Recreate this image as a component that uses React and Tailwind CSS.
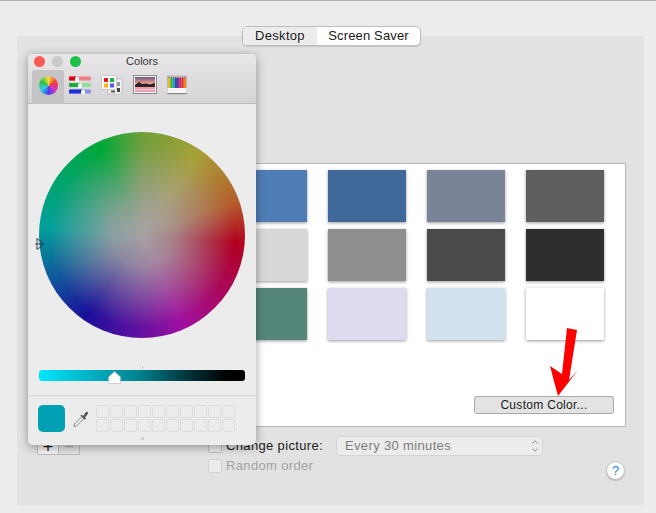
import { ChevronUp, ChevronDown } from 'lucide-react';

const swatches = [
  '#4f7db5', '#40699a', '#798597', '#5f5f5f',
  '#d8d8d8', '#8f8f8f', '#4a4a4a', '#2e2e2e',
  '#54877a', '#dfdaf0', '#d2e1ee', '#ffffff',
];

function SliderIcon() {
  return (
    <svg width="23" height="18" viewBox="0 0 23 18">
      <rect x="0" y="0.5" width="22" height="4" rx="1" fill="#f08088" />
      <rect x="0" y="0.5" width="8" height="4" rx="1" fill="#e00010" />
      <rect x="0" y="7" width="22" height="4" rx="1" fill="#90e09c" />
      <rect x="0" y="7" width="11" height="4" rx="1" fill="#18b038" />
      <rect x="0" y="13.5" width="22" height="4" rx="1" fill="#8490ec" />
      <rect x="0" y="13.5" width="14" height="4" rx="1" fill="#2030d8" />
      <path d="M6 5.5 V2 L8 0 L10 2 V5.5 Z" fill="#f8f8f8" />
      <path d="M9 12 V8.5 L11 6.5 L13 8.5 V12 Z" fill="#f8f8f8" />
      <path d="M12 18 V15 L14 13 L16 15 V18 Z" fill="#f8f8f8" />
    </svg>
  );
}

function PaletteIcon() {
  return (
    <svg width="22" height="20" viewBox="0 0 22 20">
      <rect x="7" y="4" width="14" height="15" fill="#f2f2f2" stroke="#aaa" strokeWidth="0.6" />
      <rect x="16" y="7" width="3" height="4" fill="#9a9a9a" />
      <rect x="16" y="13" width="3" height="4" fill="#444" />
      <rect x="10" y="15.5" width="4" height="2" fill="#555" />
      <rect x="0.5" y="0.5" width="15" height="14" fill="#fafafa" stroke="#b5b5b5" strokeWidth="0.6" />
      <rect x="3" y="3" width="4" height="4" fill="#f01020" />
      <rect x="9" y="3" width="4" height="4" fill="#18b848" />
      <rect x="3" y="8.5" width="4" height="4" fill="#f8b818" />
      <rect x="9" y="8.5" width="4" height="4" fill="#5858f0" />
    </svg>
  );
}

function ImageIcon() {
  return (
    <svg width="24" height="19" viewBox="0 0 24 19">
      <defs>
        <linearGradient id="sky" x1="0" y1="0" x2="0" y2="1">
          <stop offset="0" stopColor="#6a5a88" />
          <stop offset="0.45" stopColor="#f8a088" />
          <stop offset="1" stopColor="#e0a0c0" />
        </linearGradient>
      </defs>
      <rect x="0.5" y="0.5" width="23" height="18" fill="#f6f6f6" stroke="#8a8a8a" />
      <rect x="2" y="2" width="20" height="15" fill="url(#sky)" />
      <path d="M2 10 L6 7 L9 9 L13 8.5 L17 9.5 L22 8 L22 12 L2 12 Z" fill="#2c2228" />
      <rect x="2" y="14" width="20" height="1" fill="#f4ccd4" />
    </svg>
  );
}

function PencilsIcon() {
  const colors = ['#e8c020', '#40b040', '#20a0a0', '#2050c0', '#8030a0', '#d02060', '#e03020', '#f08020'];
  return (
    <svg width="20" height="20" viewBox="0 0 20 20">
      <rect x="0.5" y="1" width="19" height="18" fill="#eee" stroke="#999" strokeWidth="0.6" />
      {colors.map((c, i) => (
        <g key={c}>
          <path d={`M${1 + i * 2.25} 3 L${2 + i * 2.25} 1 L${3.2 + i * 2.25} 3 Z`} fill="#7a6a60" />
          <rect x={1 + i * 2.25} y="3" width="2.25" height="10" fill={c} />
        </g>
      ))}
      <rect x="0.5" y="13" width="19" height="5" fill="#f4f4f4" />
      <rect x="0.5" y="18" width="19" height="1" fill="#888" />
    </svg>
  );
}

function Eyedropper() {
  return (
    <svg width="18" height="18" viewBox="0 0 18 18">
      <path d="M2.5 14 L10 6.5 L12 8.5 L4.5 16 L2 16.5 Z" fill="#ededed" stroke="#8a8a8a" strokeWidth="1" />
      <path d="M9.5 4.5 L11 6 L14 2 C15 1 16.8 2.4 16 3.7 L13 7.5 L14 8.8 L12.6 9.8 L8.5 5.6 Z" fill="#555" />
    </svg>
  );
}

function ColorsWindow() {
  return (
    <div className="absolute left-[28px] top-[53px] w-[228px] h-[391px] flex flex-col rounded-[5px] bg-[#ececec] shadow-[0_2px_10px_rgba(0,0,0,0.38)] overflow-hidden">
      <div className="h-[50px] shrink-0 relative bg-gradient-to-b from-[#e9e7e9] to-[#d5d3d5] border-b border-[#b9b9b9]">
        <div className="flex gap-[7px] pl-[6px] pt-[2px]">
          <div className="w-[11px] h-[11px] rounded-full bg-[#fb5a55]" />
          <div className="w-[11px] h-[11px] rounded-full bg-[#c9c9c9]" />
          <div className="w-[11px] h-[11px] rounded-full bg-[#1fc04a]" />
        </div>
        <div className="absolute -top-px inset-x-0 text-center text-[11px] leading-[17px] text-[#333]">Colors</div>
        <div className="flex items-end h-[35px] pl-[4px] mt-[2px]">
          <div className="w-[32px] h-[34px] bg-[#c5c3c5] rounded-t-[3px] flex items-center justify-center pb-[4px]">
            <div className="w-[19px] h-[19px] rounded-full bg-[conic-gradient(#f0e040,#f04030,#e030c0,#4040f0,#30d0e0,#30c040,#f0e040)]" />
          </div>
          <div className="flex items-center h-[34px] ml-[5px] pb-[4px]"><SliderIcon /></div>
          <div className="flex items-center h-[34px] ml-[9px] pb-[5px]"><PaletteIcon /></div>
          <div className="flex items-center h-[34px] ml-[10px] pb-[5px]"><ImageIcon /></div>
          <div className="flex items-center h-[34px] ml-[10px] pb-[4px]"><PencilsIcon /></div>
        </div>
      </div>

      <div className="pt-[28px] pl-[11px]">
        <div className="relative w-[206px] h-[206px] rounded-full bg-[conic-gradient(from_0deg,#6f9e3a_0deg,#a8a038_35deg,#b4602c_70deg,#b00020_95deg,#a80c70_135deg,#a010a0_155deg,#5a10a0_185deg,#1a109a_215deg,#105a9c_245deg,#00a09a_275deg,#00a46a_305deg,#00a838_335deg,#6f9e3a_360deg)]">
          <div className="absolute inset-0 rounded-full bg-[radial-gradient(circle_closest-side,rgba(166,162,162,1)_0%,rgba(166,162,162,0.8)_30%,rgba(166,162,162,0.38)_62%,rgba(166,162,162,0)_90%)]" />
          <svg className="absolute left-[-4px] top-[105px]" width="11" height="14" viewBox="0 0 11 14">
            <path d="M2 1 V13 M0 7 H9" stroke="#223" strokeWidth="0.8" fill="none" />
            <path d="M2 2.5 A5 4.5 0 0 1 2 11.5" stroke="#223" strokeWidth="0.8" fill="none" />
          </svg>
        </div>
      </div>

      <div className="ml-[114px] mt-[28px] w-px h-[3px] bg-[#bbb]" />
      <div className="relative mx-[11px] mt-px h-[11px] rounded-[3px] bg-gradient-to-r from-[#00e8ff] via-[#007f8c] to-[#000000]">
        <svg className="absolute left-[69px] top-[1px]" width="13" height="13" viewBox="0 0 13 13">
          <path d="M6.5 0.5 L12.5 6 V12.5 H0.5 V6 Z" fill="#fff" stroke="#b5b5b5" strokeWidth="0.6" />
        </svg>
      </div>

      <div className="mt-[14px] border-t border-[#d6d6d6] flex items-center pl-[10px] pt-[9px]">
        <div className="w-[27px] h-[27px] rounded-[5px] bg-[#00a1b4]" />
        <div className="ml-[7px] w-[18px]"><Eyedropper /></div>
        <div className="ml-[6px] grid grid-cols-[repeat(10,13px)] gap-px">
          {Array.from({ length: 20 }).map((_, i) => (
            <div key={i} className="h-[13px] rounded-[2px] border border-[#dcdcdc]" />
          ))}
        </div>
      </div>
      <div className="mt-[5px] mx-auto w-[3px] h-[3px] rounded-full bg-[#c9c9c9]" />
    </div>
  );
}

export default function App() {
  return (
    <div className="relative w-[656px] h-[513px] overflow-hidden bg-[#ececec] border-t border-[#b0b0b0] font-['Liberation_Sans',sans-serif] text-[13px] text-[#1a1a1a]">
      <div className="relative ml-[17px] mt-[35px] w-[627px] h-[469px] bg-[#e2e2e2] rounded-[2px] pt-[127px] pl-[20px]">
        <div className="absolute left-[225px] top-[-10px] w-[179px] h-[20px] flex rounded-[5px] border border-[#bdbdbd] bg-white overflow-hidden shadow-[0_1px_1px_rgba(0,0,0,0.12)]">
          <div className="w-[74px] bg-[#ececec] text-center leading-[18px] tracking-[0.3px]">Desktop</div>
          <div className="flex-1 text-center leading-[18px] tracking-[0.15px]">Screen Saver</div>
        </div>

        <div className="w-[589px] h-[264px] bg-white border border-[#b8b8b8] pl-[191px] pt-[6px] relative">
          <div className="grid grid-cols-[repeat(4,78px)] grid-rows-[repeat(3,52px)] gap-x-[21px] gap-y-[7px]">
            {swatches.map((c, i) => (
              <div key={i} className="shadow-[0_1px_3px_rgba(0,0,0,0.4)]" style={{ backgroundColor: c }} />
            ))}
          </div>
          <div className="absolute left-[436px] top-[232px] w-[140px] h-[18px] rounded-[3px] border border-[#a8a8a8] bg-[#e3e3e3] text-center text-[12px] leading-[16px] tracking-[0.3px]">Custom Color...</div>
        </div>

        <div className="flex">
          <div className="flex h-[22px] mt-[6px] w-[43px] border border-[#bcbcbc] rounded-[2px]">
            <div className="w-[21px] bg-[#f2f2f2] border-r border-[#bcbcbc] flex items-center justify-center pt-[5px] text-[18px] leading-none">+</div>
            <div className="flex-1 flex items-center justify-center pt-[5px] text-[#aaa] text-[16px] leading-none">−</div>
          </div>
          <div className="ml-[128px] mt-[9px] flex flex-col gap-[5px]">
            <div className="flex items-center h-[20px]">
              <div className="w-[14px] h-[14px] rounded-[3px] border border-[#bdbdbd] bg-[#ececec]" />
              <span className="ml-[4px] tracking-[0.35px] w-[110px]">Change picture:</span>
              <div className="flex items-center justify-between w-[207px] h-[20px] rounded-[4px] border border-[#d4d4d4] bg-[#ececec] pl-[8px] pr-[2px] text-[#7c7c7c] tracking-[0.35px]">
                Every 30 minutes
                <span className="flex flex-col text-[#777]">
                  <ChevronUp size={10} strokeWidth={2} className="-mb-[2px]" />
                  <ChevronDown size={10} strokeWidth={2} />
                </span>
              </div>
            </div>
            <div className="flex items-center h-[14px] -mt-[2px]">
              <div className="w-[14px] h-[14px] rounded-[3px] border border-[#cfcfcf] bg-[#ececec]" />
              <span className="ml-[4px] tracking-[0.35px] text-[#a3a3a3]">Random order</span>
            </div>
          </div>
        </div>

        <div className="absolute left-[589px] top-[425px] w-[19px] h-[19px] rounded-full bg-white border border-[#c4c4c4] shadow-[0_1px_1px_rgba(0,0,0,0.2)] flex items-center justify-center text-[#2a80f0] text-[13px] leading-none">?</div>
      </div>

      <ColorsWindow />

      <svg className="absolute left-[545px] top-[322px]" width="40" height="76" viewBox="0 0 40 76">
        <path d="M22 5 L32 7 L24 57 L33 47 L13 73 L5 43 L17 51 Z" fill="#ff0000" />
      </svg>
    </div>
  );
}
